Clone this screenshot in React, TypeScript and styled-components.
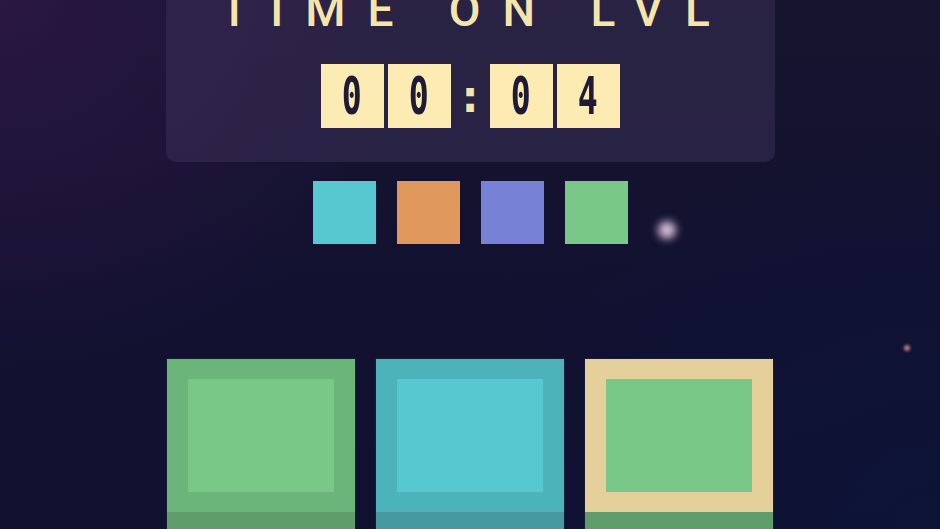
import React from 'react';
import styled, { createGlobalStyle } from 'styled-components';

const GlobalStyle = createGlobalStyle`
    html, body {
        margin: 0;
        padding: 0;
        background: #12122d;
    }
    * {
        box-sizing: border-box;
    }
`;

const Page = styled.div`
    position: relative;
    width: 100%;
    height: 100vh;
    overflow: hidden;
    display: flex;
    flex-direction: column;
    align-items: center;
    background:
        radial-gradient(ellipse 420px 380px at 0% 0%, rgba(48, 24, 72, 0.75) 0%, rgba(48, 24, 72, 0) 100%),
        radial-gradient(ellipse 500px 400px at 100% 100%, rgba(12, 20, 58, 0.8) 0%, rgba(12, 20, 58, 0) 100%),
        linear-gradient(180deg, #17142f 0%, #121130 55%, #0f112f 100%);
`;

const Panel = styled.section`
    width: 609px;
    margin-top: -24px;
    padding: 11px 0 34px;
    border-radius: 10px;
    background: rgba(66, 56, 96, 0.42);
    display: flex;
    flex-direction: column;
    align-items: center;
`;

const Title = styled.h2`
    margin: 0;
    padding-left: 12px;
    font-family: Roboto, 'DejaVu Sans', sans-serif;
    font-weight: 500;
    font-size: 46px;
    line-height: 46px;
    letter-spacing: 22px;
    color: #f6e5ab;
    white-space: nowrap;
`;

const Timer = styled.div`
    margin-top: 31px;
    display: flex;
    align-items: center;
    gap: 4px;
`;

const DigitBox = styled.div`
    width: 63px;
    height: 64px;
    background: #fcecb3;
    display: flex;
    align-items: center;
    justify-content: center;
`;

const Digit = styled.span`
    display: inline-block;
    font-family: 'DejaVu Sans Mono', monospace;
    font-size: 52px;
    font-weight: 700;
    line-height: 1;
    color: #1d1b36;
    transform: scaleX(0.64);
`;

const Colon = styled.span`
    width: 31px;
    text-align: center;
    font-family: 'DejaVu Sans Mono', monospace;
    font-size: 46px;
    font-weight: 700;
    line-height: 1;
    color: #f6e5ab;
`;

const Palette = styled.div`
    margin-top: 19px;
    display: flex;
    gap: 21px;
`;

const Swatch = styled.div<{ $color: string }>`
    width: 63px;
    height: 63px;
    background: ${(p) => p.$color};
`;

const Board = styled.div`
    margin-top: 115px;
    display: grid;
    grid-template-columns: repeat(3, 188px);
    gap: 21px;
`;

const Tile = styled.div<{ $frame: string; $base: string }>`
    display: flex;
    flex-direction: column;
    background: ${(p) => p.$frame};
    box-shadow: 0 0 0 1px rgba(255, 255, 255, 0.04);
    &::after {
        content: '';
        display: block;
        height: 40px;
        background: ${(p) => p.$base};
    }
`;

const TileFace = styled.div`
    padding: 20px 21px;
`;

const TileInner = styled.div<{ $color: string }>`
    height: 113px;
    background: ${(p) => p.$color};
`;

const Glow = styled.div<{ $size: number; $color: string }>`
    position: absolute;
    width: ${(p) => p.$size}px;
    height: ${(p) => p.$size}px;
    border-radius: 50%;
    background: ${(p) => p.$color};
    filter: blur(${(p) => p.$size / 4}px);
`;

const swatches = ['#56c9d0', '#e1985c', '#7781d6', '#79c887'];

const tiles = [
    { frame: '#6bb57a', inner: '#79c887', base: '#5f9d6a' },
    { frame: '#4db3bb', inner: '#56c8cf', base: '#4699a1' },
    { frame: '#e5d09c', inner: '#79c887', base: '#5f9d6a' },
];

const App: React.FC = () => {
    return (
        <>
            <GlobalStyle />
            <Page>
                <Panel>
                    <Title>TIME ON LVL</Title>
                    <Timer>
                        <DigitBox><Digit>0</Digit></DigitBox>
                        <DigitBox><Digit>0</Digit></DigitBox>
                        <Colon>:</Colon>
                        <DigitBox><Digit>0</Digit></DigitBox>
                        <DigitBox><Digit>4</Digit></DigitBox>
                    </Timer>
                </Panel>
                <Palette>
                    {swatches.map((c) => (
                        <Swatch key={c} $color={c} />
                    ))}
                </Palette>
                <Board>
                    {tiles.map((t, i) => (
                        <Tile key={i} $frame={t.frame} $base={t.base}>
                            <TileFace>
                                <TileInner $color={t.inner} />
                            </TileFace>
                        </Tile>
                    ))}
                </Board>
                <Glow $size={18} $color="#d8c0dc" style={{ left: 658, top: 221 }} />
                <Glow $size={6} $color="#c8787c" style={{ left: 904, top: 345 }} />
            </Page>
        </>
    );
};

export default App;
